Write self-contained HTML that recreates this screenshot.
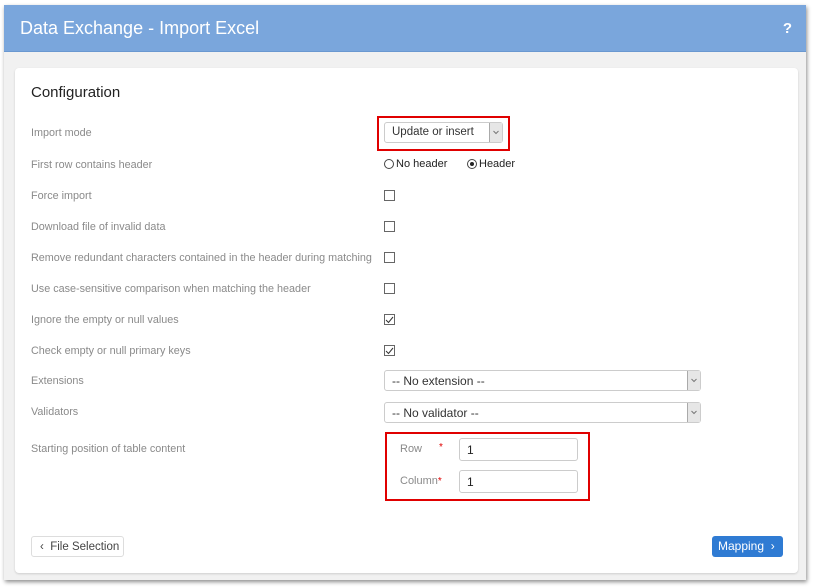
<!DOCTYPE html>
<html><head><style>
*{box-sizing:border-box;margin:0;padding:0}
body{width:814px;height:588px;background:#fff;font-family:"Liberation Sans",sans-serif;position:relative;overflow:hidden}
#frame{position:absolute;left:4px;top:5px;width:802px;height:575px;background:#f1f1f1;box-shadow:1px 2px 4px rgba(0,0,0,.45)}
#hdr{position:absolute;left:0;top:0;width:802px;height:47px;background:#7aa6dc;border-bottom:1px solid #6a98d0;color:#fff}
#hdr .t{position:absolute;left:16px;top:13px;font-size:18px}
#hdr .q{position:absolute;right:14px;top:15px;font-size:15px;font-weight:bold}
#card{position:absolute;left:11px;top:63px;width:783px;height:505px;background:#fff;border-radius:4px;box-shadow:0 1px 2px rgba(0,0,0,.15)}
.a{position:absolute}
.lbl{position:absolute;left:31px;font-size:10.8px;color:#8a8a8a}
.cb{position:absolute;left:384px;width:11px;height:11px;border:1px solid #666;background:#fff}
.sel{position:absolute;left:384px;width:317px;height:21px;border:1px solid #ccc;border-radius:3px;font-size:12px;color:#333;padding:3px 0 0 7px}
.sel .ar{position:absolute;right:0;top:0;width:13px;height:19px;background:#e6e6e6;border-left:1px solid #aaa}
.inp{position:absolute;left:459px;width:119px;height:23px;border:1px solid #ccc;border-radius:3px;font-size:12px;color:#222;padding:4px 0 0 7px}
.red{position:absolute;border:2px solid #e00000}
</style></head><body>
<div id="frame">
<div id="hdr"><div class="t">Data Exchange - Import Excel</div><div class="q">?</div></div>
<div id="card"></div>
</div>
<div class="a" style="left:31px;top:84px;font-size:15px;color:#222">Configuration</div>
<div class="lbl" style="top:127px">Import mode</div>
<div class="lbl" style="top:159px">First row contains header</div>
<div class="lbl" style="top:190px">Force import</div>
<div class="lbl" style="top:221px">Download file of invalid data</div>
<div class="lbl" style="top:252px">Remove redundant characters contained in the header during matching</div>
<div class="lbl" style="top:283px">Use case-sensitive comparison when matching the header</div>
<div class="lbl" style="top:314px">Ignore the empty or null values</div>
<div class="lbl" style="top:345px">Check empty or null primary keys</div>
<div class="lbl" style="top:375px">Extensions</div>
<div class="lbl" style="top:406px">Validators</div>
<div class="lbl" style="top:443px">Starting position of table content</div>

<div class="red" style="left:377px;top:116px;width:133px;height:35px"></div>
<div class="sel" style="left:384px;top:122px;width:119px;height:21px;font-size:11.5px">Update or insert<div class="ar"><svg width="12" height="19"><path d="M3.5 8 L6 10.5 L8.5 8" stroke="#777" fill="none"/></svg></div></div>

<div class="a" style="left:384px;top:159px;width:10px;height:10px;border:1px solid #444;border-radius:50%"></div>
<div class="a" style="left:396px;top:158px;font-size:11px;color:#222">No header</div>
<div class="a" style="left:467px;top:159px;width:10px;height:10px;border:1px solid #444;border-radius:50%"><div style="position:absolute;left:2px;top:2px;width:4px;height:4px;border-radius:50%;background:#222"></div></div>
<div class="a" style="left:479px;top:158px;font-size:11px;color:#222">Header</div>

<div class="cb" style="top:190px"></div>
<div class="cb" style="top:221px"></div>
<div class="cb" style="top:252px"></div>
<div class="cb" style="top:283px"></div>
<div class="cb" style="top:314px"><svg width="9" height="9" style="position:absolute;left:0;top:0"><path d="M1 5 L3.5 7.5 L8 2" stroke="#333" fill="none" stroke-width="1"/></svg></div>
<div class="cb" style="top:345px"><svg width="9" height="9" style="position:absolute;left:0;top:0"><path d="M1 5 L3.5 7.5 L8 2" stroke="#333" fill="none" stroke-width="1"/></svg></div>

<div class="sel" style="top:370px">-- No extension --<div class="ar"><svg width="12" height="19"><path d="M3.5 8 L6 10.5 L8.5 8" stroke="#777" fill="none"/></svg></div></div>
<div class="sel" style="top:402px">-- No validator --<div class="ar"><svg width="12" height="19"><path d="M3.5 8 L6 10.5 L8.5 8" stroke="#777" fill="none"/></svg></div></div>

<div class="red" style="left:385px;top:432px;width:205px;height:69px"></div>
<div class="a" style="left:400px;top:443px;font-size:11px;color:#8a8a8a">Row</div>
<div class="a" style="left:439px;top:442px;font-size:10px;color:#e00000">*</div>
<div class="a" style="left:400px;top:475px;font-size:11px;color:#8a8a8a">Column<span style="color:#e00000;font-size:10px">*</span></div>
<div class="inp" style="top:438px">1</div>
<div class="inp" style="top:470px">1</div>

<div class="a" style="left:31px;top:536px;width:93px;height:21px;border:1px solid #ddd;border-radius:3px;font-size:11.5px;color:#444;padding:4px 0 0 8px">&#8249;&nbsp;&nbsp;File Selection</div>
<div class="a" style="left:712px;top:536px;width:71px;height:21px;background:#2f7bd3;border-radius:3px;font-size:12px;color:#fff;padding:3px 0 0 6px">Mapping&nbsp;&nbsp;&#8250;</div>
</body></html>
